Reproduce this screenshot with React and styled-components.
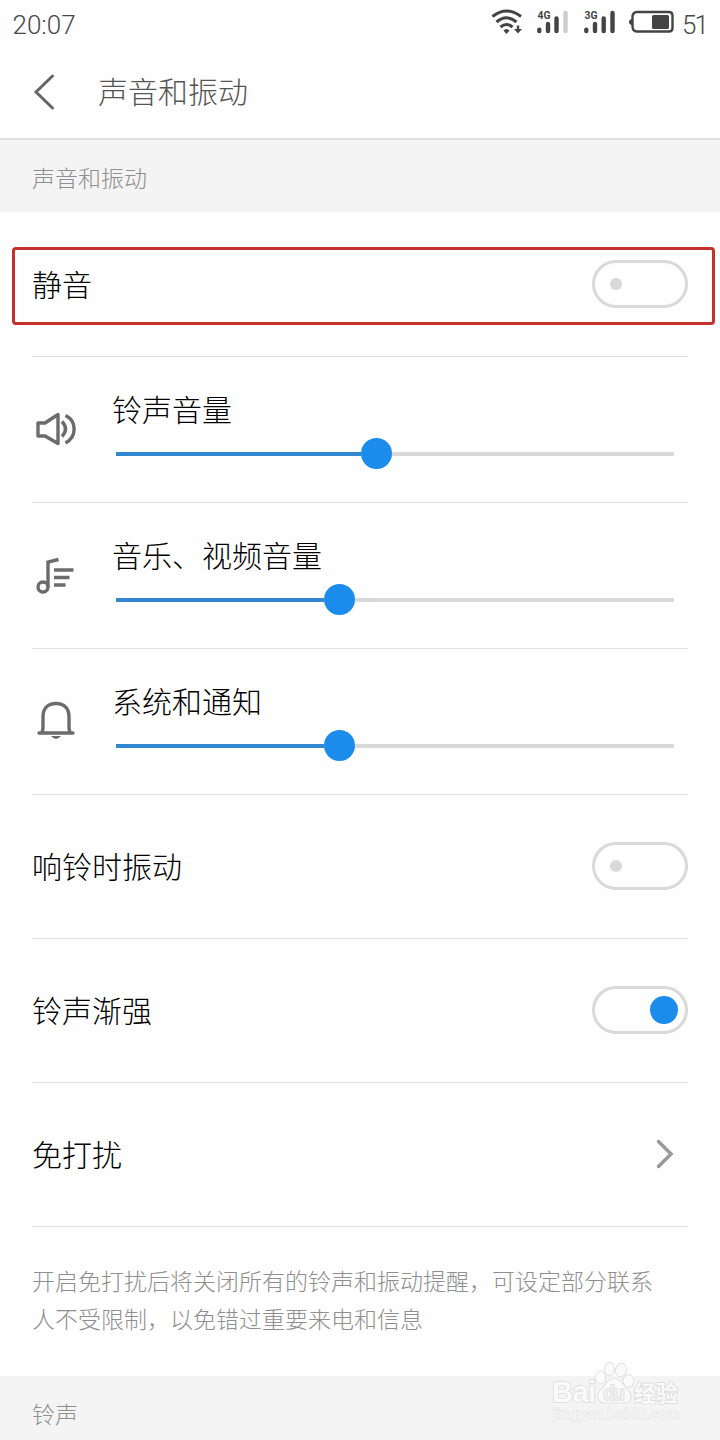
import React from "react";
import styled, { createGlobalStyle } from "styled-components";

const GlobalStyle = createGlobalStyle`
  * { box-sizing: border-box; }
  body {
    margin: 0;
    background: #fefefe;
    font-family: "Noto Sans CJK SC", sans-serif;
    font-weight: 300;
  }
`;

const Screen = styled.div`
  position: relative;
  display: flex;
  flex-direction: column;
  width: 720px;
  height: 1440px;
  overflow: hidden;
  background: #fefefe;
`;

const StatusBar = styled.header`
  display: flex;
  flex: none;
  align-items: center;
  justify-content: space-between;
  height: 46px;
  padding: 3px 13px 0 12.5px;
  color: #484848;
  font-family: Roboto, sans-serif;
  font-size: 26px;
  font-weight: 300;
  line-height: 46px;
`;

const StatusIcons = styled.div`
  display: flex;
  align-items: center;
  gap: 8px;
`;

const StatusGlyphs = styled.svg`
  display: block;
  margin-top: -6px;
`;

const BatteryLevel = styled.span`
  width: 25px;
  letter-spacing: -2px;
`;

const TitleBar = styled.div`
  display: flex;
  flex: none;
  align-items: center;
  gap: 42px;
  height: 94px;
  padding: 0 32px;
  border-bottom: 2px solid #dfdfdf;
`;

const Title = styled.h1`
  margin: 0;
  padding-bottom: 4px;
  color: #555;
  font-size: 30px;
  font-weight: 300;
  line-height: 44px;
`;

const SectionLabel = styled.div`
  flex: none;
  height: 72px;
  padding: 0 32px;
  background: #f4f4f4;
  color: #8f8f8f;
  font-size: 23px;
  line-height: 74px;
`;

const List = styled.main`
  display: flex;
  flex: none;
  flex-direction: column;
  padding: 0 32px;
`;

const Row = styled.div`
  position: relative;
  display: flex;
  align-items: center;
  justify-content: space-between;
  height: ${({ $height }) => $height || 144}px;
  padding-bottom: ${({ $height }) => ($height ? 0 : 1)}px;
  border-bottom: 1px solid #e1e1e1;
`;

const Label = styled.span`
  padding-bottom: 3px;
  color: #000;
  font-size: 30px;
  line-height: 44px;
  white-space: nowrap;
`;

const Highlight = styled.div`
  position: absolute;
  top: 35px;
  left: -20px;
  width: 703px;
  height: 78px;
  border: 3px solid #c3312c;
  border-radius: 4px;
`;

const Switch = styled.div`
  display: flex;
  align-items: center;
  justify-content: ${({ $on }) => ($on ? "flex-end" : "flex-start")};
  width: 96px;
  height: 48px;
  padding: 0 ${({ $on }) => ($on ? 7 : 15)}px;
  border: 3px solid #d9d9d9;
  border-radius: 24px;
`;

const Knob = styled.span`
  width: ${({ $on }) => ($on ? 28 : 12)}px;
  height: ${({ $on }) => ($on ? 28 : 12)}px;
  border-radius: 50%;
  background: ${({ $on }) => ($on ? "#1b8cec" : "#d9d9d9")};
`;

const VolumeRow = styled.div`
  display: flex;
  align-items: center;
  height: 146px;
  padding: 0 14px 1px 0;
  border-bottom: 1px solid #e1e1e1;
`;

const VolumeIcon = styled.svg`
  flex: none;
  width: 48px;
  height: 48px;
  margin-right: 32px;
  fill: none;
  stroke: #6b6b6b;
  stroke-width: 3.4;
`;

const VolumeBody = styled.div`
  display: flex;
  flex: 1;
  flex-direction: column;
  gap: 5px;
  padding-bottom: 3px;
`;

const Track = styled.div`
  display: flex;
  align-items: center;
  height: 32px;
  margin-left: 4px;
`;

const Filled = styled.span`
  width: ${({ $width }) => $width}px;
  height: 4px;
  background: #3288d0;
`;

const Thumb = styled.span`
  flex: none;
  width: 31px;
  height: 31px;
  border-radius: 50%;
  background: #1b8cec;
`;

const Remaining = styled.span`
  flex: 1;
  height: 4px;
  background: #d9d9d9;
`;

const Chevron = styled.svg`
  margin-right: 14px;
`;

const Hint = styled.p`
  height: 149px;
  margin: 0;
  padding-top: 34px;
  color: #8f8f8f;
  font-size: 23px;
  line-height: 38px;
  white-space: nowrap;
`;

const Watermark = styled.svg`
  position: absolute;
  left: 546px;
  top: 1356px;
  fill: #fafafa;
  stroke: #dcdcdc;
  stroke-width: 1.6;
  paint-order: stroke;
`;

function Toggle({ on }) {
  return (
    <Switch $on={on}>
      <Knob $on={on} />
    </Switch>
  );
}

function Volume({ label, level, children }) {
  return (
    <VolumeRow>
      <VolumeIcon viewBox="0 0 48 48">{children}</VolumeIcon>
      <VolumeBody>
        <Label>{label}</Label>
        <Track>
          <Filled $width={level} />
          <Thumb />
          <Remaining />
        </Track>
      </VolumeBody>
    </VolumeRow>
  );
}

function Indicators() {
  return (
    <StatusGlyphs width="184" height="30" viewBox="490 7 184 30">
      <g fill="none" stroke="#444" strokeWidth="3">
        <path d="M492.500 16.500Q506.500 5.500 521 16.500" />
        <path d="M496.500 22Q506.500 13.500 516.500 22" />
        <path d="M500.500 27Q506.500 22 512.500 27" />
        <path d="M518 25.500v4" strokeWidth="2.400" />
      </g>
      <path d="M503.500 30.500Q506.500 27.500 509.500 30.500L506.500 34ZM514 29h8l-4 4.500Z" fill="#444" />
      <g fill="none" strokeLinecap="round" strokeWidth="4.400" stroke="#444">
        <path d="M539.300 29.700v1.400M548 24v7.100M556.500 18.500v12.600M586.300 29.700v1.400M595 24v7.100M603.700 18.500v12.600M612.500 13v18.100" />
        <path d="M565.500 13v18.100" stroke="#ccc" />
      </g>
      <g fill="#444" fontFamily="Roboto, sans-serif" fontSize="10.500" fontWeight="700">
        <text x="537.500" y="18.500" textLength="13" lengthAdjust="spacingAndGlyphs">4G</text>
        <text x="584.500" y="18.500" textLength="13" lengthAdjust="spacingAndGlyphs">3G</text>
      </g>
      <path d="M637 12H669Q672.500 12 672.500 15.500V28Q672.500 31.500 669 31.500H637Q632.500 31.500 632.500 26V17.500Q632.500 12 637 12Z" fill="none" stroke="#444" strokeWidth="2.400" />
      <rect x="652" y="15" width="17" height="14" rx="1.500" fill="#444" />
      <path d="M632 19Q629 19.500 629 22Q629 24.500 632 25Z" fill="#444" />
    </StatusGlyphs>
  );
}

function BrandMark() {
  return (
    <Watermark width="150" height="70" viewBox="546 1356 150 70">
      <text x="552" y="1402" fontFamily="Liberation Sans, sans-serif" fontSize="29" fontWeight="700" textLength="44">Bai</text>
      <ellipse cx="600.500" cy="1377.500" rx="4.800" ry="6.200" />
      <ellipse cx="609.500" cy="1369" rx="4.600" ry="6.500" />
      <ellipse cx="621" cy="1370" rx="5" ry="6.500" transform="rotate(12 621 1370)" />
      <ellipse cx="628.500" cy="1381" rx="5" ry="6" />
      <path d="M614 1379C607 1379 605 1387 600 1391C596 1396 599 1403 605 1402.500H624C631 1403 633 1396 628 1391C622 1385 621 1379 614 1379Z" />
      <text x="603" y="1400" fontFamily="Liberation Sans, sans-serif" fontSize="20" fontWeight="700" textLength="22" fill="#f0f0f0" strokeWidth="1.400">du</text>
      <text x="634" y="1401" fontFamily="Noto Sans CJK SC, sans-serif" fontSize="22" fontWeight="700">经验</text>
      <text x="553" y="1419" fontFamily="Liberation Sans, sans-serif" fontSize="15" fontWeight="400" textLength="126" strokeWidth="1">jingyan.baidu.com</text>
    </Watermark>
  );
}

export default function App() {
  return (
    <Screen>
      <GlobalStyle />
      <StatusBar>
        <span>20:07</span>
        <StatusIcons>
          <Indicators />
          <BatteryLevel>51</BatteryLevel>
        </StatusIcons>
      </StatusBar>
      <TitleBar>
        <svg width="24" height="36" viewBox="0 0 24 36" fill="none" stroke="#666" strokeWidth="3">
          <path d="M20.500 2L4 18L20.500 34" strokeLinecap="round" />
        </svg>
        <Title>声音和振动</Title>
      </TitleBar>
      <SectionLabel>声音和振动</SectionLabel>
      <List>
        <Row $height={145}>
          <Label>静音</Label>
          <Toggle />
          <Highlight />
        </Row>
        <Volume label="铃声音量" level={245}>
          <path d="M6 18H13L26 9.500V38.500L13 31H6Z" strokeLinejoin="round" />
          <path d="M30 16.500Q37 24 30 31.500M33.500 10.500C45 16 45 32 33.500 38" />
        </Volume>
        <Volume label="音乐、视频音量" level={208}>
          <circle cx="11" cy="36" r="5" />
          <path d="M16 36V11L26.500 8.500M22 19H41.500M22 26.500H37.500M22 34H33.500" />
        </Volume>
        <Volume label="系统和通知" level={208}>
          <path d="M7 36H41M10 36Q11 33 11 29V20C11 11 16 6.500 24 6.500S37 11 37 20V29Q37 33 38 36" strokeLinecap="round" />
          <path d="M19 39H29Q24 45 19 39Z" fill="#6b6b6b" stroke="none" />
        </Volume>
        <Row>
          <Label>响铃时振动</Label>
          <Toggle />
        </Row>
        <Row>
          <Label>铃声渐强</Label>
          <Toggle on />
        </Row>
        <Row>
          <Label>免打扰</Label>
          <Chevron width="20" height="32" viewBox="0 0 20 32" fill="none" stroke="#999" strokeWidth="3.500" strokeLinecap="round">
            <path d="M4.500 3.500L17 16L4.500 28.500" />
          </Chevron>
        </Row>
        <Hint>
          开启免打扰后将关闭所有的铃声和振动提醒，可设定部分联系
          <br />
          人不受限制，以免错过重要来电和信息
        </Hint>
      </List>
      <SectionLabel>铃声</SectionLabel>
      <BrandMark />
    </Screen>
  );
}
